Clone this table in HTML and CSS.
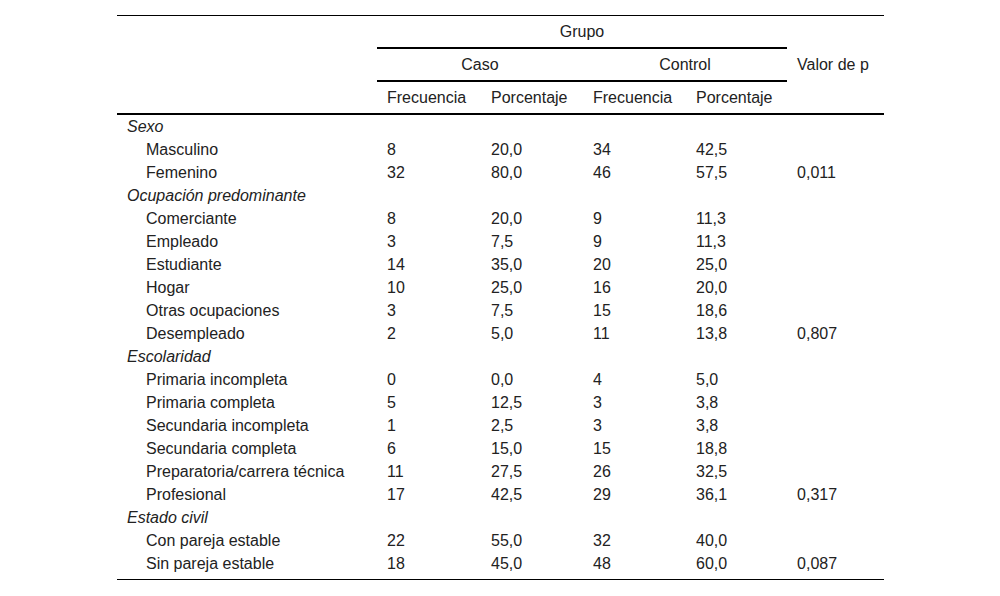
FILE: index.html
```html
<!DOCTYPE html>
<html lang="es">
<head>
<meta charset="utf-8">
<title>Tabla</title>
<link rel="stylesheet" href="styles.css">
</head>
<body>
<table class="data">
  <colgroup>
    <col class="c-label">
    <col class="c-num">
    <col class="c-num2">
    <col class="c-num3">
    <col class="c-num4">
    <col class="c-p">
  </colgroup>
  <thead>
    <tr class="h1">
      <th class="corner" rowspan="3"></th>
      <th class="grupo" colspan="4">Grupo</th>
      <th class="pval" rowspan="3">Valor de p</th>
    </tr>
    <tr class="h2">
      <th class="sub" colspan="2">Caso</th>
      <th class="sub" colspan="2">Control</th>
    </tr>
    <tr class="h3">
      <th class="col">Frecuencia</th>
      <th class="col">Porcentaje</th>
      <th class="col">Frecuencia</th>
      <th class="col">Porcentaje</th>
    </tr>
  </thead>
  <tbody>
    <tr class="cat"><td colspan="6">Sexo</td></tr>
    <tr><td class="item">Masculino</td><td>8</td><td>20,0</td><td>34</td><td>42,5</td><td></td></tr>
    <tr><td class="item">Femenino</td><td>32</td><td>80,0</td><td>46</td><td>57,5</td><td>0,011</td></tr>
    <tr class="cat"><td colspan="6">Ocupación predominante</td></tr>
    <tr><td class="item">Comerciante</td><td>8</td><td>20,0</td><td>9</td><td>11,3</td><td></td></tr>
    <tr><td class="item">Empleado</td><td>3</td><td>7,5</td><td>9</td><td>11,3</td><td></td></tr>
    <tr><td class="item">Estudiante</td><td>14</td><td>35,0</td><td>20</td><td>25,0</td><td></td></tr>
    <tr><td class="item">Hogar</td><td>10</td><td>25,0</td><td>16</td><td>20,0</td><td></td></tr>
    <tr><td class="item">Otras ocupaciones</td><td>3</td><td>7,5</td><td>15</td><td>18,6</td><td></td></tr>
    <tr><td class="item">Desempleado</td><td>2</td><td>5,0</td><td>11</td><td>13,8</td><td>0,807</td></tr>
    <tr class="cat"><td colspan="6">Escolaridad</td></tr>
    <tr><td class="item">Primaria incompleta</td><td>0</td><td>0,0</td><td>4</td><td>5,0</td><td></td></tr>
    <tr><td class="item">Primaria completa</td><td>5</td><td>12,5</td><td>3</td><td>3,8</td><td></td></tr>
    <tr><td class="item">Secundaria incompleta</td><td>1</td><td>2,5</td><td>3</td><td>3,8</td><td></td></tr>
    <tr><td class="item">Secundaria completa</td><td>6</td><td>15,0</td><td>15</td><td>18,8</td><td></td></tr>
    <tr><td class="item">Preparatoria/carrera técnica</td><td>11</td><td>27,5</td><td>26</td><td>32,5</td><td></td></tr>
    <tr><td class="item">Profesional</td><td>17</td><td>42,5</td><td>29</td><td>36,1</td><td>0,317</td></tr>
    <tr class="cat"><td colspan="6">Estado civil</td></tr>
    <tr><td class="item">Con pareja estable</td><td>22</td><td>55,0</td><td>32</td><td>40,0</td><td></td></tr>
    <tr class="last"><td class="item">Sin pareja estable</td><td>18</td><td>45,0</td><td>48</td><td>60,0</td><td>0,087</td></tr>
  </tbody>
</table>
</body>
</html>
```

FILE: styles.css
```css
html, body {
  margin: 0;
  padding: 0;
  background: #ffffff;
}

body {
  font-family: "Liberation Sans", Arial, sans-serif;
  font-size: 16px;
  color: #222222;
}

.data {
  border-collapse: separate;
  border-spacing: 0;
  table-layout: fixed;
  width: 767px;
  margin: 15px 0 0 117px;
}

.c-label { width: 260px; }
.c-num { width: 104px; }
.c-num2 { width: 102px; }
.c-num3 { width: 103px; }
.c-num4 { width: 101px; }
.c-p { width: 97px; }

.data th,
.data td {
  padding: 0 0 0 10px;
  font-weight: normal;
  text-align: left;
  white-space: nowrap;
  line-height: 18px;
}

.data thead th {
  vertical-align: middle;
}

.data .h1 th {
  border-top: 1px solid #000;
  height: 31px;
}

.data .corner,
.data .pval {
  border-bottom: 2px solid #000;
}

.data .grupo {
  text-align: center;
  padding: 0;
  border-bottom: 2px solid #000;
}

.data .h2 .sub {
  text-align: center;
  padding: 0;
  height: 31px;
  border-bottom: 2px solid #000;
}

.data .h3 .col {
  height: 31px;
  border-bottom: 2px solid #000;
}

.data tbody td {
  height: 23px;
  line-height: 23px;
  vertical-align: middle;
}

.data .cat td {
  font-style: italic;
}

.data td.item {
  padding-left: 29px;
}

.data .last td {
  border-bottom: 1px solid #000;
  vertical-align: top;
  padding-bottom: 4px;
}
```
